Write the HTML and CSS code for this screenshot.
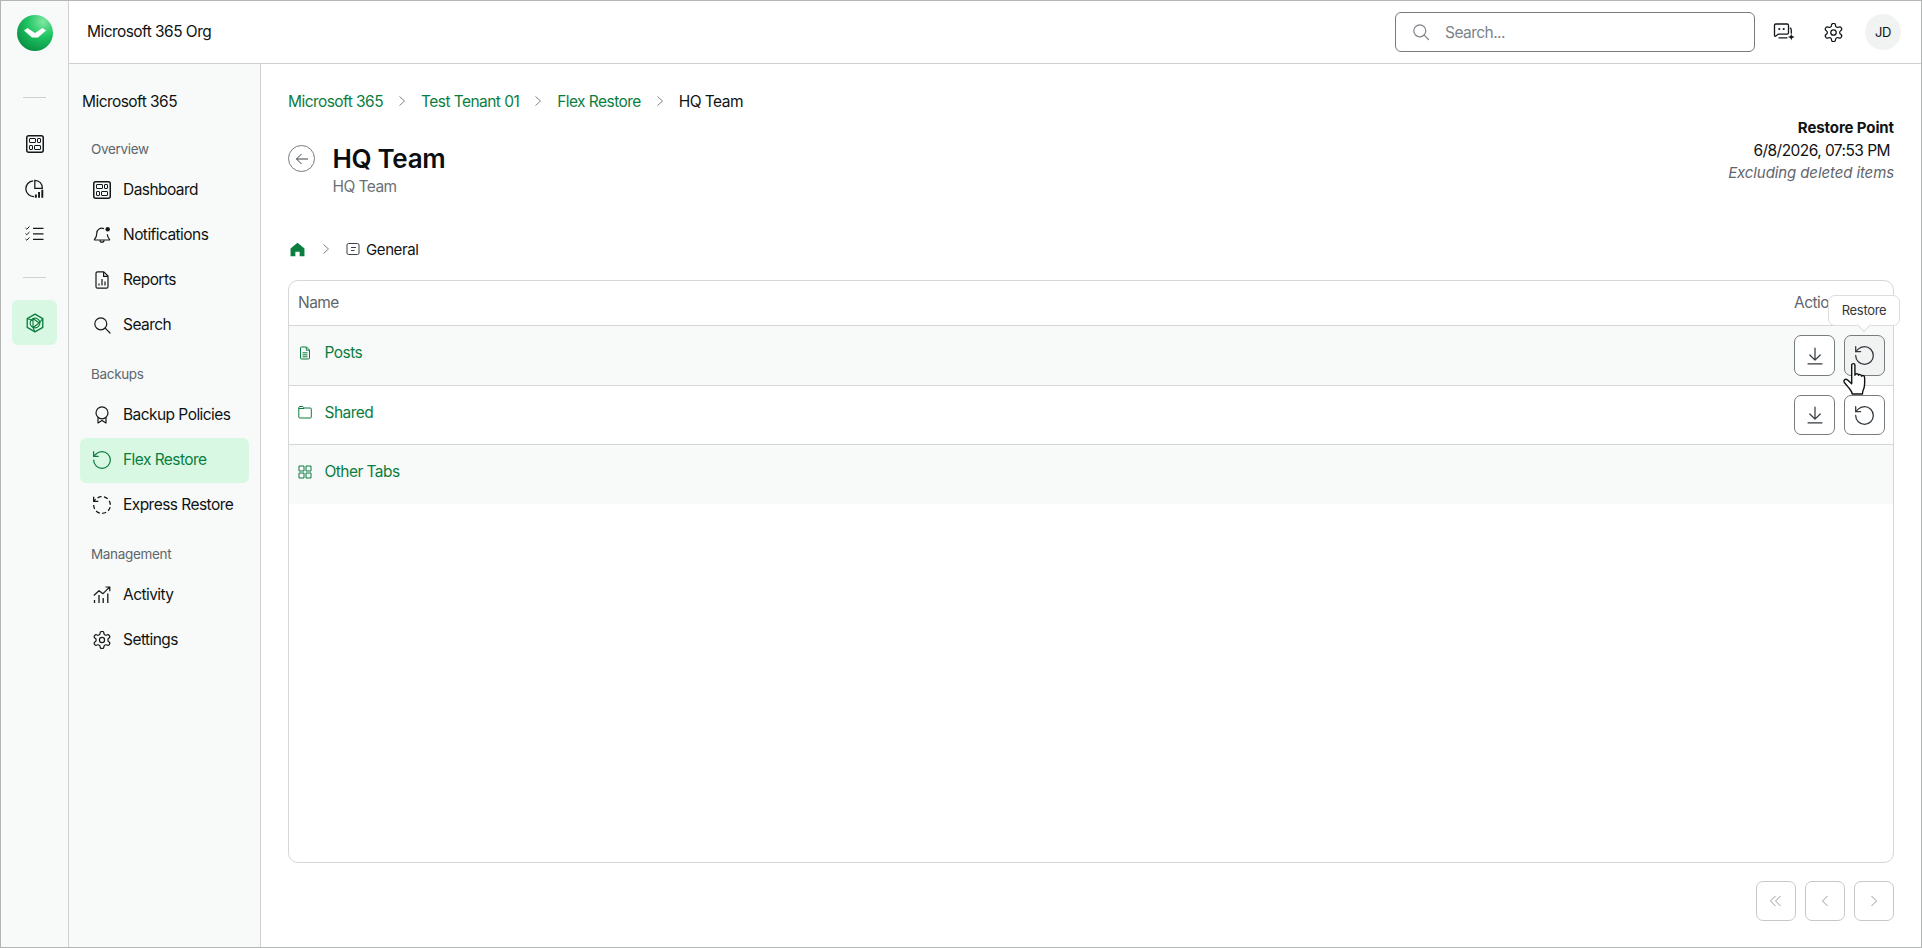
FILE: index.html
```html
<!DOCTYPE html>
<html lang="en">
<head>
    <meta charset="UTF-8">
    <meta name="viewport" content="width=device-width, initial-scale=1.0">
    <title>Microsoft 365 Org - Flex Restore</title>
    <link rel="stylesheet" href="styles.css">
</head>
<body>
    <!-- shared icons -->
    <svg class="sprite" aria-hidden="true">
        <symbol id="i-dashboard" viewBox="0 0 18 18">
            <rect x="0.75" y="0.75" width="16.5" height="16.5" rx="2" fill="none" stroke="currentColor" stroke-width="1.5"/>
            <rect x="3.5" y="3.5" width="6" height="4" rx="0.5" fill="none" stroke="currentColor" stroke-width="1"/>
            <rect x="11.5" y="3.5" width="3" height="4" rx="0.5" fill="none" stroke="currentColor" stroke-width="1"/>
            <rect x="3.5" y="10.5" width="3" height="4" rx="0.5" fill="none" stroke="currentColor" stroke-width="1"/>
            <rect x="8.5" y="10.5" width="6" height="4" rx="0.5" fill="none" stroke="currentColor" stroke-width="1"/>
        </symbol>
        <symbol id="i-gear" viewBox="1.5 1.5 21 21">
            <path fill="none" stroke="currentColor" stroke-width="1.4" stroke-linejoin="round" d="M12.22 2h-.44a2 2 0 0 0-2 2v.18a2 2 0 0 1-1 1.73l-.43.25a2 2 0 0 1-2 0l-.15-.08a2 2 0 0 0-2.73.73l-.22.38a2 2 0 0 0 .73 2.73l.15.1a2 2 0 0 1 1 1.72v.51a2 2 0 0 1-1 1.74l-.15.09a2 2 0 0 0-.73 2.73l.22.38a2 2 0 0 0 2.73.73l.15-.08a2 2 0 0 1 2 0l.43.25a2 2 0 0 1 1 1.73V20a2 2 0 0 0 2 2h.44a2 2 0 0 0 2-2v-.18a2 2 0 0 1 1-1.73l.43-.25a2 2 0 0 1 2 0l.15.08a2 2 0 0 0 2.73-.73l.22-.39a2 2 0 0 0-.73-2.73l-.15-.08a2 2 0 0 1-1-1.74v-.5a2 2 0 0 1 1-1.74l.15-.09a2 2 0 0 0 .73-2.73l-.22-.38a2 2 0 0 0-2.73-.73l-.15.08a2 2 0 0 1-2 0l-.43-.25a2 2 0 0 1-1-1.73V4a2 2 0 0 0-2-2z"/>
            <circle cx="12" cy="12" r="3" fill="none" stroke="currentColor" stroke-width="1.4"/>
        </symbol>
        <symbol id="i-restore" viewBox="2.3 2.3 19.4 19.4">
            <path fill="none" stroke="currentColor" stroke-width="1.3" stroke-linecap="round" stroke-linejoin="round" d="M3 12a9 9 0 1 0 9-9 9.75 9.75 0 0 0-6.74 2.74L3 8"/>
            <path fill="none" stroke="currentColor" stroke-width="1.3" stroke-linecap="round" stroke-linejoin="round" d="M3 3v5h5"/>
        </symbol>
        <symbol id="i-download" viewBox="0 0 18 18">
            <path fill="none" stroke="currentColor" stroke-width="1.2" stroke-linecap="round" stroke-linejoin="round" d="M9 1v12M3.8 8 9 13.2 14.2 8M2 16.8h14"/>
        </symbol>
    </svg>

    <div class="frame">
        <nav class="rail">
            <div class="logo"><svg viewBox="0 0 36 36" width="36" height="36">
                <defs>
                    <radialGradient id="logoFill" cx="72%" cy="18%" r="95%">
                        <stop offset="0" stop-color="#7fe8a2"/>
                        <stop offset="0.45" stop-color="#1fc463"/>
                        <stop offset="1" stop-color="#07893f"/>
                    </radialGradient>
                </defs>
                <circle cx="18" cy="18" r="18" fill="url(#logoFill)"/>
                <path fill="#fff" d="M7 15.5 10.5 13 18 18 25.5 13 29 15.5 21 22.5H15z"/>
            </svg></div>
            <div class="rail-sep"></div>
            <a class="rail-btn"><svg width="18" height="18"><use href="#i-dashboard"/></svg></a>
            <a class="rail-btn"><svg viewBox="0 0 18 18" width="19" height="19">
                <path fill="none" stroke="currentColor" stroke-width="1.2" d="M7.8 1.800a7.400 7.400 0 1 0 .8 14.800"/>
                <path fill="none" stroke="currentColor" stroke-width="1.2" d="M9.300 1.200v7.600h7.200a7.300 7.300 0 0 0-7.200-7.600z"/>
                <path fill="none" stroke="currentColor" stroke-width="1.8" d="M10.300 17.800v-3M13.300 17.800v-5.500M16.400 17.800v-7.500"/>
            </svg></a>
            <a class="rail-btn"><svg viewBox="0 0 19 18" width="19" height="18">
                <path fill="none" stroke="currentColor" stroke-width="1" d="M.5 3 1.800 4.200 4.500 1.500M.5 8.500 1.800 9.700 4.500 7M.5 14 1.800 15.200 4.500 12.500"/>
                <path fill="none" stroke="currentColor" stroke-width="1.2" d="M8 3.300h10.500M8 8.800h10.500M8 14.300h10.500"/>
            </svg></a>
            <div class="rail-sep rail-sep-low"></div>
            <a class="rail-btn rail-btn-active"><svg viewBox="0 0 18 18" width="20" height="20">
                <path fill="none" stroke="currentColor" stroke-width="1.2" stroke-linejoin="round" d="M9 1 16 5v8l-7 4-7-4V5z"/>
                <circle cx="9" cy="9" r="4.400" fill="none" stroke="currentColor" stroke-width="1"/>
                <path fill="none" stroke="currentColor" stroke-width="1" stroke-linejoin="round" d="M7.200 5V13L12.800 9zM2 5l5.200 2M16 5 12.800 9M9 17l-1.800-4"/>
            </svg></a>
        </nav>

        <div class="shell">
            <header class="topbar">
                <div class="org-name">Microsoft 365 Org</div>
                <div class="topbar-right">
                    <div class="search">
                        <svg viewBox="0 0 18 18" width="18" height="18"><circle cx="7.800" cy="7.800" r="6" fill="none" stroke="currentColor" stroke-width="1.200"/><path fill="none" stroke="currentColor" stroke-width="1.200" stroke-linecap="round" d="m12.200 12.200 4.300 4.300"/></svg>
                        <span>Search...</span>
                    </div>
                    <a class="top-icon top-chat"><svg viewBox="0 0 22 22" width="22" height="22">
                        <path fill="none" stroke="currentColor" stroke-width="1.300" stroke-linejoin="round" d="M2.800 3h11.400a1.300 1.300 0 0 1 1.300 1.300v7.500a1.300 1.300 0 0 1-1.300 1.300H5.500L2.500 15.300 1.500 15V4.300A1.300 1.300 0 0 1 2.800 3z"/>
                        <path fill="none" stroke="currentColor" stroke-width="1.300" stroke-linecap="round" d="M6 16.800h8M17.300 7c.8.500 1 1.200 1 2.200v3"/>
                        <circle cx="6.300" cy="8" r="1.100" fill="currentColor"/>
                        <circle cx="10.700" cy="8" r="1.100" fill="currentColor"/>
                        <path fill="currentColor" d="M18.300 12.500c.4 2.200 1.300 3.100 3.500 3.500-2.200.4-3.100 1.300-3.500 3.500-.4-2.200-1.300-3.100-3.500-3.500 2.200-.4 3.100-1.300 3.500-3.500z"/>
                    </svg></a>
                    <a class="top-icon top-gear"><svg width="19" height="19"><use href="#i-gear"/></svg></a>
                    <div class="avatar">JD</div>
                </div>
            </header>

            <div class="content">
                <aside class="sidebar">
                    <div class="side-title">Microsoft 365</div>

                    <div class="side-label">Overview</div>
                    <a class="side-item"><svg width="18" height="18"><use href="#i-dashboard"/></svg>Dashboard</a>
                    <a class="side-item"><svg viewBox="0 0 18 18" width="18" height="18">
                        <path fill="none" stroke="currentColor" stroke-width="1.200" stroke-linejoin="round" d="M11 2.700A5 5 0 0 0 3.800 7.200c0 3.600-1.200 5-2.300 6.100-.2.200-.1.700.3.700h14.400c.4 0 .5-.5.300-.7-1-1-2-2.300-2.200-5"/>
                        <path fill="none" stroke="currentColor" stroke-width="1.200" d="M7 14.200a2 2 0 0 0 4 0"/>
                        <circle cx="14.700" cy="3.200" r="2.200" fill="currentColor"/>
                    </svg>Notifications</a>
                    <a class="side-item"><svg viewBox="0 0 18 18" width="18" height="18">
                        <path fill="none" stroke="currentColor" stroke-width="1.200" stroke-linejoin="round" d="M10.800.8H4.500A1.500 1.500 0 0 0 3 2.300v13.400a1.500 1.500 0 0 0 1.500 1.500h9a1.500 1.500 0 0 0 1.500-1.500V5z"/>
                        <path fill="none" stroke="currentColor" stroke-width="1.200" d="M10.600 1v4.300H15"/>
                        <path fill="none" stroke="currentColor" stroke-width="1.200" d="M6 14.500v-2M9 14.500V8M12 14.500v-4"/>
                    </svg>Reports</a>
                    <a class="side-item"><svg viewBox="0 0 18 18" width="18" height="18"><circle cx="7.800" cy="7.800" r="6" fill="none" stroke="currentColor" stroke-width="1.200"/><path fill="none" stroke="currentColor" stroke-width="1.200" stroke-linecap="round" d="m12.200 12.200 4.800 4.800"/></svg>Search</a>

                    <div class="side-label side-label-gap">Backups</div>
                    <a class="side-item"><svg viewBox="0 0 18 18" width="18" height="18">
                        <circle cx="9" cy="6.800" r="6" fill="none" stroke="currentColor" stroke-width="1.200"/>
                        <path fill="none" stroke="currentColor" stroke-width="1.200" stroke-linejoin="round" d="M5 11.500V17l4-2.500 4 2.500v-5.500"/>
                    </svg>Backup Policies</a>
                    <a class="side-item side-item-active"><svg width="18" height="18"><use href="#i-restore"/></svg>Flex Restore</a>
                    <a class="side-item"><svg viewBox="2.300 2.300 19.400 19.400" width="18" height="18">
                        <path fill="none" stroke="currentColor" stroke-width="1.400" stroke-dasharray="4.500 2.600" d="M3 12a9 9 0 1 0 9-9 9.750 9.750 0 0 0-6.740 2.740L3 8"/>
                        <path fill="none" stroke="currentColor" stroke-width="1.400" stroke-linejoin="round" d="M3 3v5h5"/>
                    </svg>Express Restore</a>

                    <div class="side-label side-label-gap">Management</div>
                    <a class="side-item"><svg viewBox="0 0 18 18" width="18" height="18">
                        <path fill="none" stroke="currentColor" stroke-width="1.200" stroke-linejoin="round" d="M.8 9.500 6 4.700l4 3 6.500-6.500M12.500 1h4.300v4.300"/>
                        <path fill="none" stroke="currentColor" stroke-width="1.300" d="M1.500 17v-3M6 17V9M10.200 17v-5M14.800 17V7.500"/>
                    </svg>Activity</a>
                    <a class="side-item"><svg width="18" height="18"><use href="#i-gear"/></svg>Settings</a>
                </aside>

                <main class="main">
                    <div class="crumbs">
                        <a>Microsoft 365</a>
                        <svg class="crumb-chevron" viewBox="0 0 8 12" width="8" height="12"><path fill="none" stroke="currentColor" stroke-width="1" d="m1.500 1.500 5 4.500-5 4.500"/></svg>
                        <a>Test Tenant 01</a>
                        <svg class="crumb-chevron" viewBox="0 0 8 12" width="8" height="12"><path fill="none" stroke="currentColor" stroke-width="1" d="m1.500 1.500 5 4.500-5 4.500"/></svg>
                        <a>Flex Restore</a>
                        <svg class="crumb-chevron" viewBox="0 0 8 12" width="8" height="12"><path fill="none" stroke="currentColor" stroke-width="1" d="m1.500 1.500 5 4.500-5 4.500"/></svg>
                        <span>HQ Team</span>
                    </div>

                    <div class="page-head">
                        <div class="page-title">
                            <button class="back-btn"><svg viewBox="0 0 14 14" width="14" height="14"><path fill="none" stroke="currentColor" stroke-width="1" d="M13 7H1.500M6.500 2 1.500 7l5 5"/></svg></button>
                            <div>
                                <h1>HQ Team</h1>
                                <div class="subtitle">HQ Team</div>
                            </div>
                        </div>
                        <div class="restore-point">
                            <strong>Restore Point</strong>
                            <div class="restore-date">6/8/2026, 07:53 PM</div>
                            <em>Excluding deleted items</em>
                        </div>
                    </div>

                    <div class="folder-path">
                        <svg class="home-icon" viewBox="0 0 14 14" width="15" height="15"><path fill="currentColor" d="M7 .8 13.500 6v7.200H9V9H5v4.200H.5V6z"/></svg>
                        <svg class="crumb-chevron" viewBox="0 0 8 12" width="8" height="12"><path fill="none" stroke="currentColor" stroke-width="1" d="m1.500 1.500 5 4.500-5 4.500"/></svg>
                        <svg class="channel-icon" viewBox="0 0 14 14" width="14" height="14"><path fill="none" stroke="currentColor" stroke-width="1" d="M2.500 1.500h9a1.500 1.500 0 0 1 1.500 1.500v8a1.500 1.500 0 0 1-1.500 1.500h-9A1.500 1.500 0 0 1 1 11V3a1.500 1.500 0 0 1 1.500-1.500zM5 5.500h5M5 8.500h3.500"/></svg>
                        <span>General</span>
                    </div>

                    <div class="table">
                        <div class="table-head">
                            <span>Name</span>
                            <span class="col-actions">Actions</span>
                        </div>
                        <div class="row row-alt row-first">
                            <a class="row-name"><svg viewBox="0 0 14 14" width="14" height="14"><path fill="none" stroke="currentColor" stroke-width="1" d="M8.500 1H3.500A1 1 0 0 0 2.500 2v10a1 1 0 0 0 1 1h7a1 1 0 0 0 1-1V4zM8.300 1.200v3h3"/><path fill="none" stroke="currentColor" stroke-width="1" d="M4.500 6.800h5M4.500 8.800h5M4.500 10.800h5"/></svg>Posts</a>
                            <div class="row-actions">
                                <button class="icon-btn"><svg width="18" height="18"><use href="#i-download"/></svg></button>
                                <button class="icon-btn icon-btn-hover">
                                    <svg width="19" height="19"><use href="#i-restore"/></svg>
                                    <div class="tooltip">Restore</div>
                                    <svg class="hand" viewBox="0 0 26 32" width="28" height="35"><path fill="#fff" stroke="#111" stroke-width="1.300" stroke-linejoin="round" d="M9 2.500c0-1.600 3-1.600 3 0V12l.6-1c1.400-.8 2.500-.2 2.700 1 .8-1.100 2.700-.6 2.800.9 1-1 2.800-.6 2.900 1.200 0 4 .5 8-1 11-.6 1.300-1 2.500-1 4.400H9.500c0-2-1.600-3.500-3-5.500L2 18.500c-1-2.200 1.400-3.300 3-2.200l4 3.700z"/></svg>
                                </button>
                            </div>
                        </div>
                        <div class="row">
                            <a class="row-name"><svg viewBox="0 0 14 14" width="14" height="14"><path fill="none" stroke="currentColor" stroke-width="1" d="M.8 12V2.500A1 1 0 0 1 1.800 1.500h3l1.500 1.500h6a1 1 0 0 1 1 1v8a1 1 0 0 1-1 1H1.800a1 1 0 0 1-1-1zM.8 3.500h5.500"/></svg>Shared</a>
                            <div class="row-actions">
                                <button class="icon-btn icon-btn-short"><svg width="18" height="18"><use href="#i-download"/></svg></button>
                                <button class="icon-btn icon-btn-short"><svg width="19" height="19"><use href="#i-restore"/></svg></button>
                            </div>
                        </div>
                        <div class="row row-alt row-last">
                            <a class="row-name"><svg viewBox="0 0 14 14" width="14" height="14"><path fill="none" stroke="currentColor" stroke-width="1" d="M1 1h5v5H1zM8 1h5v5H8zM1 8h5v5H1zM8 8h5v5H8z"/></svg>Other Tabs</a>
                        </div>
                    </div>

                    <div class="pager">
                        <button class="pager-btn"><svg viewBox="0 0 14 14" width="14" height="14"><path fill="none" stroke="currentColor" stroke-width="1" d="M6.500 2 1.500 7l5 5M11.500 2l-5 5 5 5"/></svg></button>
                        <button class="pager-btn"><svg viewBox="0 0 14 14" width="14" height="14"><path fill="none" stroke="currentColor" stroke-width="1" d="M9.500 2l-5 5 5 5"/></svg></button>
                        <button class="pager-btn"><svg viewBox="0 0 14 14" width="14" height="14"><path fill="none" stroke="currentColor" stroke-width="1" d="M4.500 2l5 5-5 5"/></svg></button>
                    </div>
                </main>
            </div>
        </div>
    </div>
</body>
</html>
```
FILE: styles.css
```css
* {
    box-sizing: border-box;
}

body {
    margin: 0;
    font-family: Inter, 'Noto Sans', sans-serif;
    font-size: 15.5px;
    letter-spacing: -0.55px;
    color: #101314;
    background: white;
}

a {
    color: inherit;
    text-decoration: none;
}

button {
    font: inherit;
    letter-spacing: inherit;
    padding: 0;
    background: none;
    cursor: pointer;
}

svg {
    display: block;
    flex-shrink: 0;
}

.sprite {
    position: absolute;
    width: 0;
    height: 0;
}

.frame {
    display: flex;
    width: 1922px;
    height: 948px;
    border: 1px solid #b4b6b5;
    overflow: hidden;
}

/* icon rail */
.rail {
    display: flex;
    flex-direction: column;
    align-items: center;
    width: 68px;
    flex-shrink: 0;
    padding-top: 14px;
    background: #f8faf9;
    border-right: 1px solid #cfd1d0;
}

.logo {
    height: 36px;
    margin-bottom: 46px;
}

.rail-sep {
    width: 23px;
    height: 1px;
    margin-bottom: 23px;
    background: #cfd1d0;
}

.rail-sep-low {
    margin-top: 21px;
    margin-bottom: 22px;
}

.rail-btn {
    display: flex;
    align-items: center;
    justify-content: center;
    width: 45px;
    height: 45px;
    color: #14181a;
}

.rail-btn-active {
    color: #0b7d3e;
    background: #d9f8e4;
    border-radius: 6px;
}

/* top bar */
.shell {
    display: flex;
    flex-direction: column;
    flex: 1;
    min-width: 0;
}

.topbar {
    display: flex;
    align-items: center;
    justify-content: space-between;
    height: 63px;
    flex-shrink: 0;
    padding: 0 20px 0 18px;
    border-bottom: 1px solid #cfd1d0;
}

.org-name {
    position: relative;
    top: -1px;
}

.topbar-right {
    display: flex;
    align-items: center;
}

.search {
    display: flex;
    align-items: center;
    gap: 15px;
    width: 360px;
    height: 40px;
    padding-left: 16px;
    color: #7d8388;
    border: 1px solid #777c80;
    border-radius: 6px;
}

.top-icon {
    display: flex;
    color: #14181a;
}

.top-chat {
    margin-left: 18px;
}

.top-gear {
    margin-left: 29px;
}

.avatar {
    display: flex;
    align-items: center;
    justify-content: center;
    width: 36px;
    height: 36px;
    margin-left: 22px;
    font-size: 13px;
    letter-spacing: -0.3px;
    background: #f1f3f2;
    border-radius: 50%;
}

/* sidebar */
.content {
    display: flex;
    flex: 1;
    min-height: 0;
}

.sidebar {
    width: 192px;
    flex-shrink: 0;
    padding: 26px 11px 0;
    background: #f8faf9;
    border-right: 1px solid #cfd1d0;
}

.side-title {
    height: 24px;
    margin: 0 0 19px 2px;
    line-height: 24px;
}

.side-label {
    height: 35px;
    padding-left: 11px;
    color: #5f666b;
    font-size: 13.5px;
    letter-spacing: -0.33px;
    line-height: 33px;
}

.side-label-gap {
    margin-top: 10px;
}

.side-item {
    display: flex;
    align-items: center;
    gap: 12px;
    height: 45px;
    padding: 0 0 2px 13px;
    border-radius: 6px;
}

.side-item svg {
    color: #14181a;
}

.side-item-active,
.side-item-active svg {
    color: #0b7d3e;
}

.side-item-active {
    background: #d9f8e4;
}

/* main area */
.main {
    display: flex;
    flex-direction: column;
    flex: 1;
    min-width: 0;
    padding: 25px 27px 0 27px;
}

.crumbs {
    display: flex;
    align-items: center;
    gap: 15px;
    height: 24px;
}

.crumbs a {
    color: #0b7d3e;
}

.crumb-chevron {
    color: #7d8388;
}

.page-head {
    display: flex;
    justify-content: space-between;
    height: 80px;
    margin-top: 4px;
}

.page-title {
    display: flex;
    gap: 17.5px;
    padding-top: 25px;
}

.back-btn {
    display: flex;
    align-items: center;
    justify-content: center;
    width: 27px;
    height: 27px;
    margin-top: 3px;
    color: #3c4246;
    border: 1px solid #777c80;
    border-radius: 50%;
}

h1 {
    margin: 0;
    font-size: 26px;
    font-weight: 600;
    letter-spacing: -0.33px;
    line-height: 34px;
    color: #0b0e10;
}

.subtitle {
    color: #6b7277;
    line-height: 22px;
}

.restore-point {
    text-align: right;
    line-height: 22.5px;
}

.restore-point strong {
    display: block;
    font-size: 15px;
    font-weight: 700;
    letter-spacing: -0.1px;
}

.restore-date {
    padding-right: 4px;
}

.restore-point em {
    font-size: 15px;
    letter-spacing: -0.1px;
    color: #5f666b;
}

.folder-path {
    display: flex;
    align-items: center;
    height: 24px;
    margin-top: 40px;
    font-size: 15px;
    letter-spacing: -0.4px;
}

.home-icon {
    margin-left: 2px;
    color: #0b7d3e;
}

.folder-path .crumb-chevron {
    margin: 0 16px 0 17px;
}

.channel-icon {
    margin-right: 6px;
    color: #3c4246;
}

.table {
    display: flex;
    flex-direction: column;
    height: 583px;
    margin-top: 19px;
    border: 1px solid #d4d7d5;
    border-radius: 10px;
}

.table-head {
    display: flex;
    align-items: center;
    justify-content: space-between;
    flex-shrink: 0;
    height: 45px;
    padding: 0 9px 2px;
    color: #5f666b;
    border-bottom: 1px solid #d4d7d5;
}

.col-actions {
    width: 90px;
}

.row {
    display: flex;
    align-items: center;
    justify-content: space-between;
    flex-shrink: 0;
    height: 59px;
    padding: 0 8px 0 9px;
    border-bottom: 1px solid #d4d7d5;
}

.row-first {
    height: 60px;
}

.row-alt {
    background: #f8faf9;
}

.row-last {
    border-bottom: none;
}

.row-name {
    display: flex;
    align-items: center;
    gap: 12.5px;
    margin-bottom: 6px;
    color: #0b7d3e;
}

.row-actions {
    display: flex;
    gap: 9px;
}

.icon-btn {
    position: relative;
    display: flex;
    align-items: center;
    justify-content: center;
    width: 41px;
    height: 41px;
    color: #33383c;
    background: white;
    border: 1px solid #777c80;
    border-radius: 7px;
}

.icon-btn-short {
    height: 40px;
}

.icon-btn-hover {
    background: #f1f3f2;
}

.tooltip {
    position: absolute;
    left: -17px;
    top: -41px;
    width: 72px;
    height: 31px;
    color: #33383c;
    font-size: 13px;
    letter-spacing: -0.33px;
    line-height: 29px;
    text-align: center;
    background: white;
    border: 1px solid #dcdedd;
    border-radius: 7px;
}

.tooltip::after {
    content: "";
    position: absolute;
    left: 30px;
    bottom: -5px;
    width: 9px;
    height: 9px;
    background: white;
    border-right: 1px solid #dcdedd;
    border-bottom: 1px solid #dcdedd;
    transform: rotate(45deg);
}

.hand {
    position: absolute;
    left: -3px;
    top: 26px;
}

.pager {
    display: flex;
    justify-content: flex-end;
    gap: 9px;
    margin-top: 18px;
}

.pager-btn {
    display: flex;
    align-items: center;
    justify-content: center;
    width: 40px;
    height: 40px;
    color: #9a9e9c;
    background: white;
    border: 1px solid #c6c8c7;
    border-radius: 7px;
}
```
